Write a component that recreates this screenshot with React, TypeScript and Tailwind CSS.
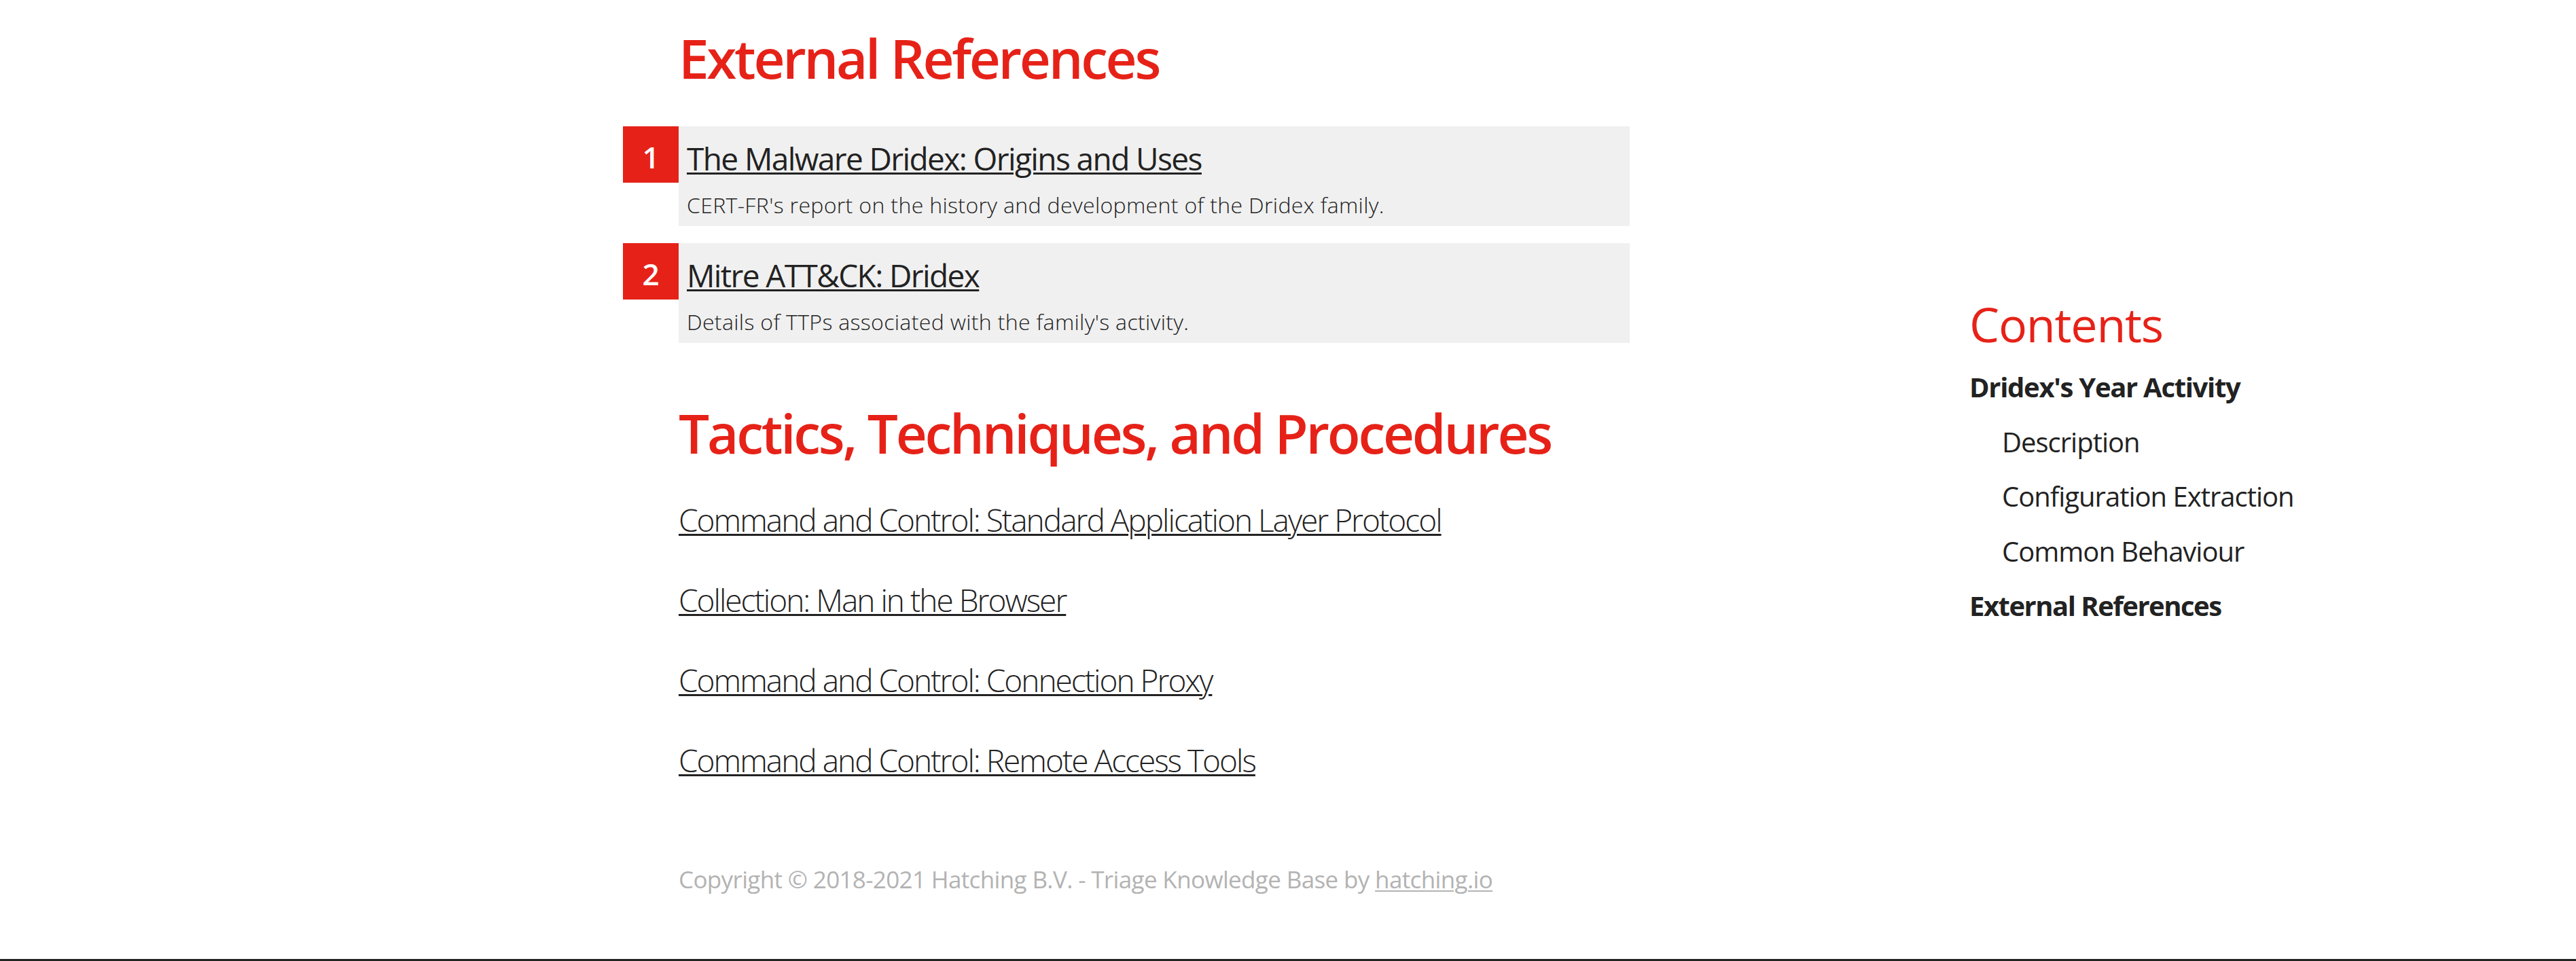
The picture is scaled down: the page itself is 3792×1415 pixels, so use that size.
import React from "react";

const refs = [
  {
    n: "1",
    title: "The Malware Dridex: Origins and Uses",
    desc: "CERT-FR's report on the history and development of the Dridex family.",
  },
  {
    n: "2",
    title: "Mitre ATT&CK: Dridex",
    desc: "Details of TTPs associated with the family's activity.",
  },
];

const ttps = [
  "Command and Control: Standard Application Layer Protocol",
  "Collection: Man in the Browser",
  "Command and Control: Connection Proxy",
  "Command and Control: Remote Access Tools",
];

export default function App() {
  return (
    <div
      className="h-[1415px] flex flex-col bg-white text-[#222] overflow-hidden"
      style={{ fontFamily: '"Open Sans", "Noto Sans", sans-serif' }}
    >
      <div className="flex-1 flex">
        <div className="w-[999px] shrink-0" />
        <main className="w-[1400px] shrink-0 pt-[45px]">
          <h2 className="text-[80px] leading-[80px] font-semibold tracking-[-3.3px] text-[#e62218]">
            External References
          </h2>
          <div className="mt-[61px] flex flex-col gap-[25px]">
            {refs.map((r) => (
              <div key={r.n} className="relative h-[147px] bg-[#f0f0f0] pl-[12px] pt-[24px]">
                <div className="absolute left-[-82px] top-0 w-[82px] h-[83px] bg-[#e62218] flex items-center justify-center text-white text-[44px] font-semibold leading-none pt-[6px]">
                  {r.n}
                </div>
                <a
                  href="#"
                  className="block w-fit text-[46px] leading-[46px] tracking-[-1.6px] underline decoration-[3px] underline-offset-[3px] text-[#222]"
                >
                  {r.title}
                </a>
                <p className="mt-[30px] text-[32px] leading-[32px] font-light tracking-[0.35px] text-[#222]">
                  {r.desc}
                </p>
              </div>
            ))}
          </div>
          <h2 className="mt-[92px] text-[80px] leading-[80px] font-semibold tracking-[-3.2px] text-[#e62218]">
            Tactics, Techniques, and Procedures
          </h2>
          <ul className="mt-[65px] flex flex-col gap-[71px]">
            {ttps.map((t) => (
              <li key={t}>
                <a
                  href="#"
                  className="text-[46px] leading-[46px] font-light tracking-[-2px] underline decoration-[3px] underline-offset-[3px] text-[#222]"
                >
                  {t}
                </a>
              </li>
            ))}
          </ul>
          <p className="mt-[134px] text-[35px] leading-[35px] tracking-[-0.64px] text-[#b3b3b3]">
            Copyright © 2018-2021 Hatching B.V. - Triage Knowledge Base by{" "}
            <a href="#" className="underline decoration-[2px] underline-offset-[3px]">
              hatching.io
            </a>
          </p>
        </main>
        <div className="w-[500px] shrink-0" />
        <aside className="pt-[442px]">
          <h3 className="text-[70px] leading-[70px] tracking-[-1.2px] text-[#e62218]">Contents</h3>
          <ul className="mt-[18px] text-[40px] leading-[80.5px] tracking-[-1px] text-[#222]">
            <li className="font-bold tracking-[-1.3px]">Dridex's Year Activity</li>
            <li className="pl-[48px]">Description</li>
            <li className="pl-[48px]">Configuration Extraction</li>
            <li className="pl-[48px]">Common Behaviour</li>
            <li className="font-bold tracking-[-1.5px]">External References</li>
          </ul>
        </aside>
      </div>
      <div className="h-[3px] bg-[#222] shrink-0" />
    </div>
  );
}
